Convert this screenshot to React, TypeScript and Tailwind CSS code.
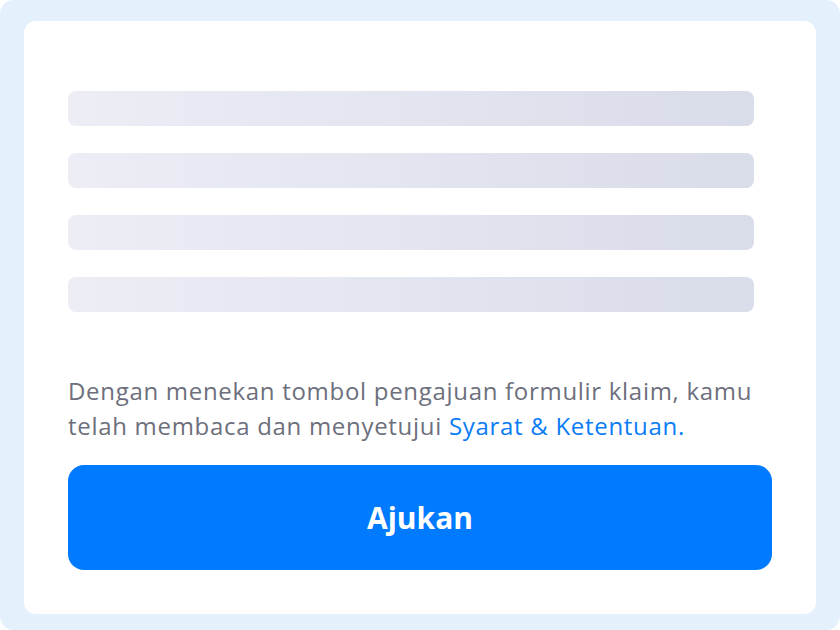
import React from 'react';

const Bar: React.FC = () => (
  <div className="h-[35px] w-full rounded-[8px] bg-gradient-to-r from-[#ecedf5] to-[#d9dce9]" />
);

export default function App() {
  return (
    <div className="w-[840px] h-[630px] bg-white">
      <div className="w-full h-full rounded-[14px] bg-[#e5f0fd] pt-[21px] pl-[24px] pr-[24px] pb-[16px]">
        <div className="w-full h-full rounded-[12px] bg-white pt-[70px] px-[44px] font-['Open_Sans',sans-serif]">
          {/* placeholder rows */}
          <div className="w-[686px] flex flex-col gap-[27px]">
            <Bar />
            <Bar />
            <Bar />
            <Bar />
          </div>

          <p className="mt-[61px] text-[24px] leading-[35px] text-[#6d707c] tracking-[0.7px]">
            Dengan menekan tombol pengajuan formulir klaim, kamu telah membaca dan menyetujui{' '}
            <a className="text-[#0a7cf5]">Syarat &amp; Ketentuan.</a>
          </p>

          <button className="mt-[22px] w-full h-[105px] rounded-[16px] bg-[#007aff] text-white text-[30px] font-bold">
            Ajukan
          </button>
        </div>
      </div>
    </div>
  );
}
